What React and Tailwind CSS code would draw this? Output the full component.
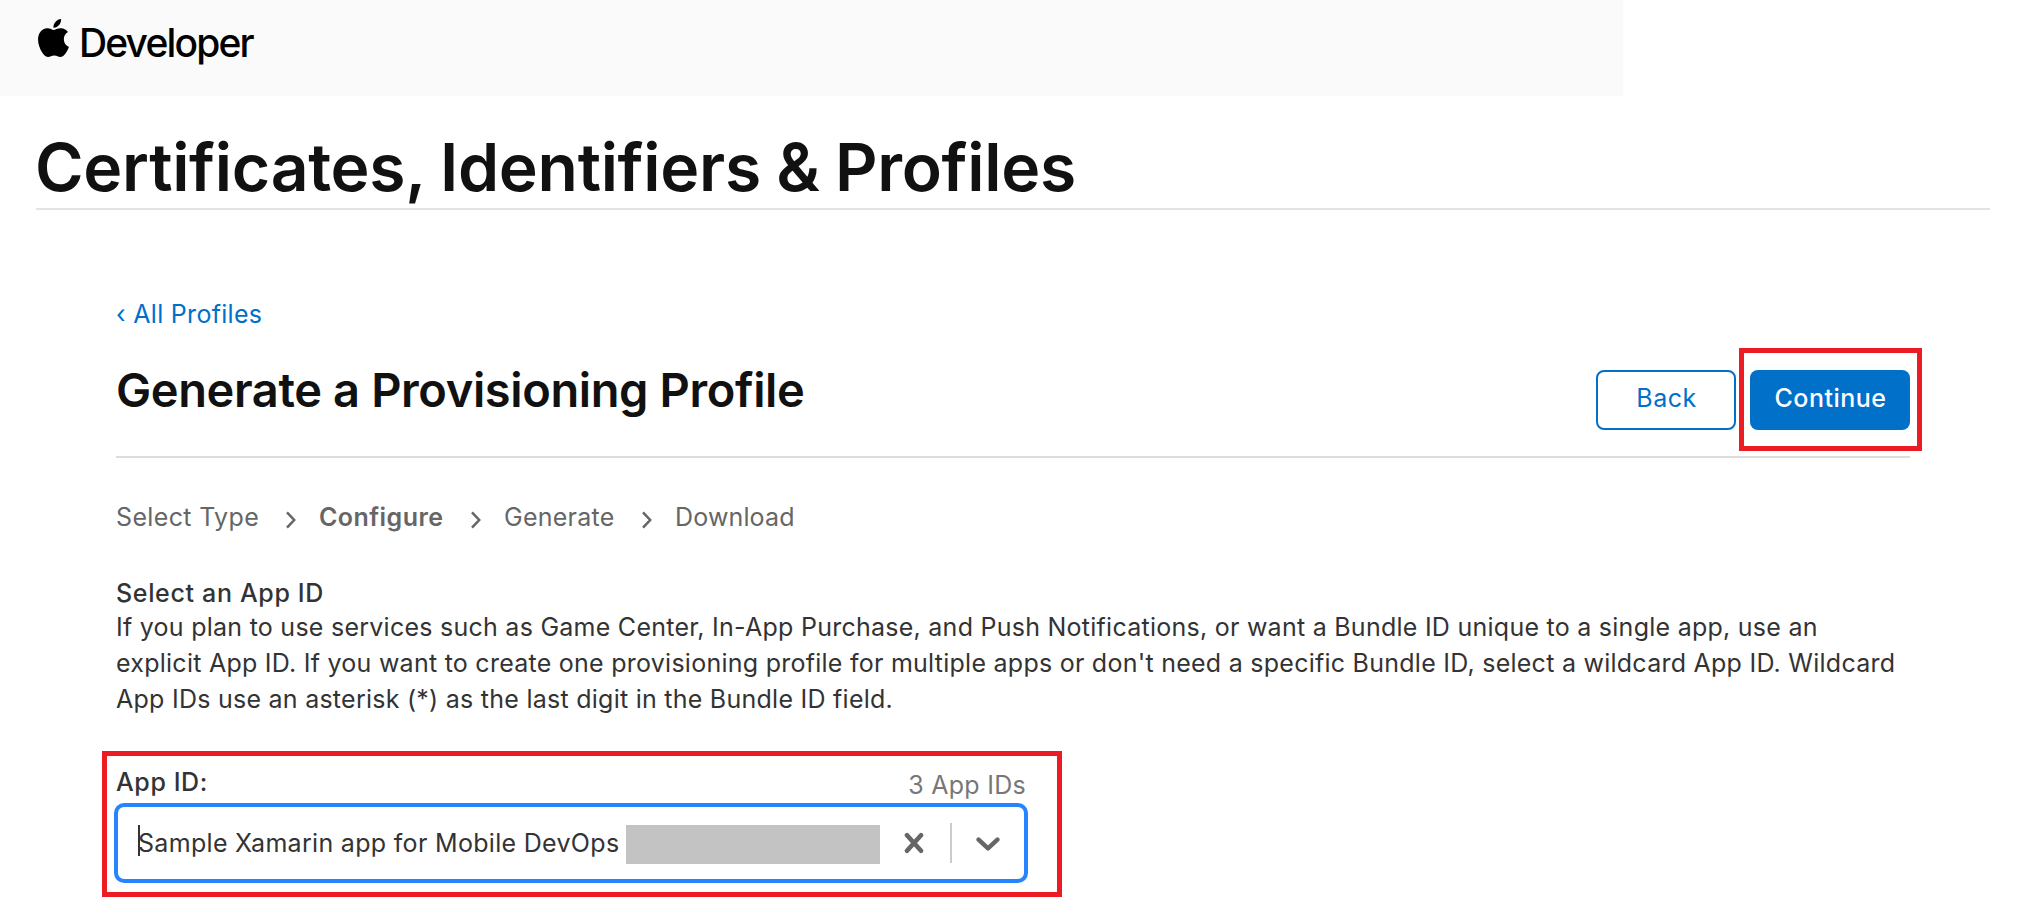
const steps = ['Select Type', 'Configure', 'Generate', 'Download']

function AppleLogo() {
  return (
    <svg viewBox="2.2 0 19.6 24" preserveAspectRatio="none" className="h-[38px] w-[31px] shrink-0" fill="black">
      <path d="M12.152 6.896c-.948 0-2.415-1.078-3.96-1.04-2.04.027-3.91 1.183-4.961 3.014-2.117 3.675-.546 9.103 1.519 12.09 1.013 1.454 2.208 3.09 3.792 3.039 1.52-.065 2.09-.987 3.935-.987 1.831 0 2.35.987 3.96.948 1.637-.026 2.676-1.48 3.676-2.948 1.156-1.688 1.636-3.325 1.662-3.415-.039-.013-3.182-1.221-3.22-4.857-.026-3.04 2.48-4.494 2.597-4.559-1.429-2.09-3.623-2.324-4.39-2.376-2-.156-3.675 1.09-4.61 1.09zM15.53 3.83c.843-1.012 1.4-2.427 1.245-3.83-1.207.052-2.662.805-3.532 1.818-.78.896-1.454 2.338-1.273 3.714 1.338.104 2.715-.688 3.559-1.701" />
    </svg>
  )
}

function StepChevron() {
  return (
    <svg viewBox="0 0 12 18" className="mt-1.5 h-[18px] w-3 shrink-0" fill="none" stroke="#666" strokeWidth="2.5">
      <path d="M2 1.4 9.2 9 2 16.6" />
    </svg>
  )
}

function Header() {
  return (
    <header className="flex h-24 w-[1623px] items-start gap-[10px] bg-[#fafafa] pl-[38px] pt-[19px]">
      <AppleLogo />
      <span className="mt-[4px] text-[39px] font-medium leading-[40px] tracking-[-1.85px] text-black">Developer</span>
    </header>
  )
}

function Breadcrumb() {
  return (
    <nav className="flex h-9 items-center text-[25px] leading-9 text-[#666]">
      <span className="w-[169px] tracking-[0.35px]">{steps[0]}</span>
      <StepChevron />
      <span className="ml-[22px] w-[151px] font-semibold tracking-[0.45px]">{steps[1]}</span>
      <StepChevron />
      <span className="ml-[22px] w-[137px] tracking-[0.25px]">{steps[2]}</span>
      <StepChevron />
      <span className="ml-[22px] tracking-[0.15px]">{steps[3]}</span>
    </nav>
  )
}

function AppIdSelect() {
  return (
    <section className="-ml-[14px] mt-[34px] h-[146px] w-[960px] border-[5px] border-[#ed1c24] px-[7px] pt-[5px]">
      <div className="flex h-[42px] justify-between pl-[2px] pr-px text-[25px] leading-[36px]">
        <label className="mt-[3px] font-medium tracking-[0.6px] text-[#333]">App ID:</label>
        <span className="mr-[23px] mt-[6px] tracking-[0.27px] text-[#777]">3 App IDs</span>
      </div>
      <div className="flex h-20 w-[914px] items-center rounded-[10px] border-4 border-[#2684ff] pl-5 text-[25px]">
        <span className="-mt-[5px] h-[31px] w-[2px] bg-[#333]" />
        <span className="-ml-[2px] w-[488px] whitespace-nowrap leading-9 tracking-[0.31px] text-[#333]">
          Sample Xamarin app for Mobile DevOps
        </span>
        <span className="mt-[3px] h-[39px] w-[254px] bg-[#c3c3c3]" />
        <svg viewBox="0 0 20 22" className="-mt-[1px] ml-6 h-[22px] w-5" stroke="#666" strokeWidth="4.6" strokeLinecap="round">
          <path d="M3 3.2 17 18.8M17 3.2 3 18.8" />
        </svg>
        <span className="ml-[26px] h-10 w-[2px] bg-[#ccc]" />
        <svg viewBox="0 0 24 14" className="ml-6 mt-[1px] h-[14px] w-6" fill="none" stroke="#666" strokeWidth="4.4" strokeLinecap="round" strokeLinejoin="round">
          <path d="M2.6 2.6 12 11.4 21.4 2.6" />
        </svg>
      </div>
    </section>
  )
}

export default function App() {
  return (
    <div className="h-[922px] w-[2027px] overflow-hidden bg-white font-['Inter',sans-serif]">
      <Header />
      <div className="ml-9 mr-[37px] h-[114px] border-b-2 border-[#e3e3e3] pt-[31px]">
        <h1 className="-ml-px text-[66px] font-semibold leading-[80px] tracking-[-0.3px] text-[#111] [word-spacing:-1px]">
          Certificates, Identifiers &amp; Profiles
        </h1>
      </div>
      <main className="ml-[116px] w-[1794px] pt-[86px]">
        <a className="block text-[25px] leading-9 tracking-[0.3px] text-[#0070c9]">‹ All Profiles</a>
        <div className="flex h-[126px] justify-between border-b-2 border-[#ddd]">
          <h2 className="mt-[28px] text-[47px] font-semibold leading-[60px] tracking-[-0.38px] text-[#111]">
            Generate a Provisioning Profile
          </h2>
          <div className="-mr-3 mt-[16px] flex h-[103px] items-start gap-[3px] text-[25px] leading-9">
            <button className="mt-[22px] h-[60px] w-[140px] rounded-lg border-2 border-[#0070c9] pb-[5px] pl-px tracking-[0.5px] text-[#0070c9]">Back</button>
            <div className="h-[103px] w-[183px] border-[5px] border-[#ed1c24] pl-[6px] pt-[17px]">
              <button className="h-[60px] w-40 rounded-lg bg-[#0070c9] pb-[5px] pl-px font-medium tracking-[0.5px] text-white">Continue</button>
            </div>
          </div>
        </div>
        <div className="pt-[41px]">
          <Breadcrumb />
        </div>
        <section className="mt-[40px] text-[25px] leading-9 text-[#333]">
          <h3 className="-mb-[2px] font-medium tracking-[0.66px]">Select an App ID</h3>
          <p className="pr-2.5 tracking-[0.255px]">
            If you plan to use services such as Game Center, In-App Purchase, and Push Notifications, or want a Bundle ID unique to a single app, use an
            explicit App ID. If you want to create one provisioning profile for multiple apps or don't need a specific Bundle ID, select a wildcard App ID. Wildcard
            App IDs use an asterisk (*) as the last digit in the Bundle ID field.
          </p>
        </section>
        <AppIdSelect />
      </main>
    </div>
  )
}
